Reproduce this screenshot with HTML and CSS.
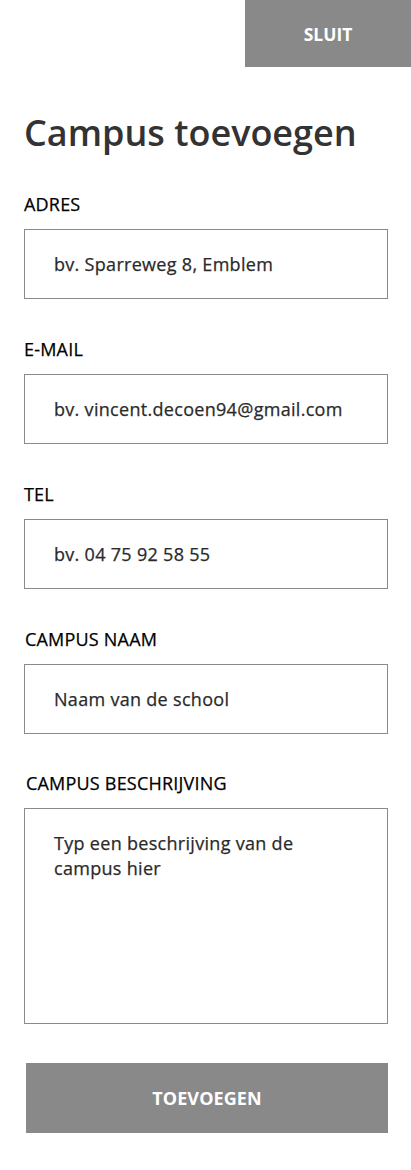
FILE: index.html
```html
<!DOCTYPE html>
<html lang="nl">
<head>
<meta charset="utf-8">
<title>Campus toevoegen</title>
<link rel="stylesheet" href="styles.css">
</head>
<body>
<header class="topbar">
  <button class="close-btn" type="button">SLUIT</button>
</header>
<main class="page">
  <h1 class="title">Campus toevoegen</h1>
  <form class="form">
    <div class="field">
      <label class="label">ADRES</label>
      <input class="input" type="text" placeholder="bv. Sparreweg 8, Emblem">
    </div>
    <div class="field">
      <label class="label">E-MAIL</label>
      <input class="input" type="text" placeholder="bv. vincent.decoen94@gmail.com">
    </div>
    <div class="field">
      <label class="label">TEL</label>
      <input class="input" type="text" placeholder="bv. 04 75 92 58 55">
    </div>
    <div class="field field-tight">
      <label class="label label-shift1">CAMPUS NAAM</label>
      <input class="input" type="text" placeholder="Naam van de school">
    </div>
    <div class="field">
      <label class="label label-shift2">CAMPUS BESCHRIJVING</label>
      <textarea class="textarea" placeholder="Typ een beschrijving van de campus hier"></textarea>
    </div>
    <button class="submit" type="button">TOEVOEGEN</button>
  </form>
</main>
</body>
</html>
```
FILE: styles.css
```css
* { box-sizing: border-box; }
html, body { margin: 0; padding: 0; background: #fff; }
body {
  font-family: "Open Sans", "Liberation Sans", sans-serif;
  color: #333;
  width: 411px;
}
.topbar {
  display: flex;
  justify-content: flex-end;
}
.close-btn {
  width: 166px;
  height: 67px;
  border: 0;
  background: #898989;
  color: #fff;
  font-family: inherit;
  font-weight: 700;
  font-size: 17.5px;
  padding: 0;
}
.page {
  padding: 0 23px 0 24px;
}
.title {
  margin: 42px 0 0;
  font-size: 36px;
  font-weight: 600;
  line-height: 48px;
  color: #333;
}
.form {
  display: flex;
  flex-direction: column;
  margin-top: 36px;
}
.field {
  display: flex;
  flex-direction: column;
  margin-bottom: 39px;
}
.field-tight { margin-bottom: 38px; }
.label {
  font-size: 18px;
  font-weight: 400;
  letter-spacing: 0.2px;
  line-height: 22px;
  color: #000;
  margin-bottom: 14px;
  -webkit-text-stroke: 0.25px #000;
}
.label-shift1 { padding-left: 1px; }
.label-shift2 { padding-left: 2px; }
.input, .textarea {
  width: 364px;
  border: 1px solid #8a8a8a;
  border-radius: 0;
  background: #fff;
  font-family: inherit;
  font-size: 18px;
  font-weight: 400;
  letter-spacing: 0.3px;
  color: #2a2a2a;
  padding: 0 0 0 29px;
  outline: none;
}
.input { height: 70px; }
.textarea {
  height: 216px;
  padding: 22px 40px 0 29px;
  line-height: 25px;
  resize: none;
  overflow: hidden;
}
.input::placeholder, .textarea::placeholder {
  color: #2a2a2a;
  opacity: 1;
  -webkit-text-stroke: 0.25px #2a2a2a;
}
.submit {
  margin: 0 0 0 2px;
  width: 362px;
  height: 70px;
  border: 0;
  background: #898989;
  color: #fff;
  font-family: inherit;
  font-weight: 700;
  font-size: 18px;
  letter-spacing: 0.1px;
  padding: 0;
}
```
